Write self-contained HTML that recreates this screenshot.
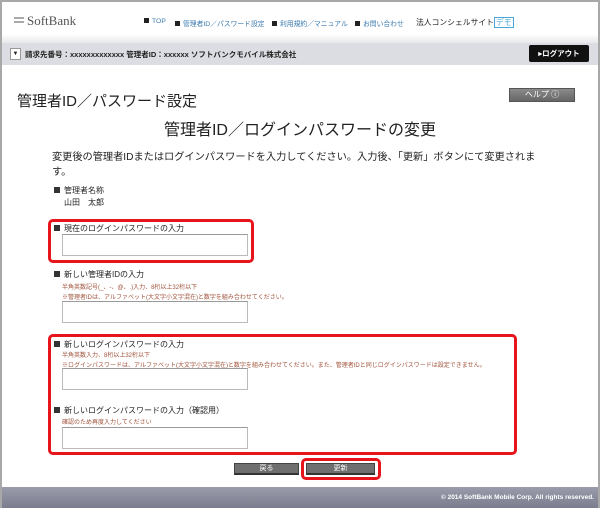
<!DOCTYPE html>
<html><head><meta charset="utf-8"><style>
*{margin:0;padding:0;box-sizing:border-box}
body{width:600px;height:508px;overflow:hidden;background:#fff;font-family:"Liberation Sans","Noto Sans CJK JP",sans-serif;color:#222;position:relative}
.a{position:absolute;white-space:nowrap}
.frame{position:absolute;left:0;top:0;width:600px;height:508px;border:2px solid #a8a8a8;border-bottom:none;pointer-events:none}
.nav{font-size:6.8px;color:#3a7ab0}
.nav i{display:inline-block;width:5px;height:5px;background:#222;margin-right:3px;vertical-align:0}
.lbl{font-size:8px;color:#222}
.lbl:before{content:"";display:inline-block;width:6px;height:6px;background:#333;margin-right:4px}
.note{font-size:6px;color:#a0523a}
.inp{position:absolute;border:1px solid #bbb;border-top-color:#999;background:#fff;width:186px;height:22px}
.red{position:absolute;border:3px solid #e8141c;border-radius:5px}
.btn{position:absolute;background:#6f6f6f;border:1px solid #444;border-bottom:2px solid #333;color:#fff;font-size:7px;text-align:center;line-height:9px;height:12px}
</style></head><body>
<div class="a" style="left:14px;top:13px;font-family:'Liberation Serif',serif;font-size:13px;color:#555"><span style="display:inline-block;width:10px;height:6px;border-top:2px solid #aaa;border-bottom:2px solid #aaa;vertical-align:2px;margin-right:3px"></span>SoftBank</div>
<div class="a nav" style="left:144px;top:18px"><i></i>TOP</div>
<div class="a nav" style="left:175px;top:18px"><i></i>管理者ID／パスワード設定</div>
<div class="a nav" style="left:272px;top:18px"><i></i>利用規約／マニュアル</div>
<div class="a nav" style="left:355px;top:18px"><i></i>お問い合わせ</div>
<div class="a" style="left:416px;top:17px;font-size:7.8px;color:#222">法人コンシェルサイト<span style="border:1px solid #4aa8d8;color:#4aa8d8;padding:0 1px">デモ</span></div>
<div class="a" style="left:0;top:34px;width:600px;height:9px;background:linear-gradient(#fff,#e8e8ec)"></div>
<div class="a" style="left:0;top:43px;width:600px;height:22px;background:#dcdde2"></div>
<div class="a" style="left:10px;top:48px;width:11px;height:12px;background:#fff;border:1px solid #999;font-size:6px;text-align:center;line-height:10px">▼</div>
<div class="a" style="left:25px;top:49px;font-size:7.5px;font-weight:bold">請求先番号：xxxxxxxxxxxxx 管理者ID：xxxxxx ソフトバンクモバイル株式会社</div>
<div class="a" style="left:529px;top:45px;width:60px;height:17px;background:#111;border-radius:2px;color:#fff;font-size:7.5px;font-weight:bold;text-align:center;line-height:17px">▸ログアウト</div>
<div class="a" style="left:17px;top:90px;font-size:15px;color:#222">管理者ID／パスワード設定</div>
<div class="a" style="left:509px;top:88px;width:66px;height:14px;background:linear-gradient(#8a8a8a,#666);border:1px solid #555;color:#fff;font-size:8px;text-align:center;line-height:12px">ヘルプ ⓘ</div>
<div class="a" style="left:0;top:116px;width:600px;text-align:center;font-size:16px;color:#222">管理者ID／ログインパスワードの変更</div>
<div class="a" style="left:52px;top:150px;font-size:10.2px;line-height:15px;color:#222;white-space:normal;width:500px">変更後の管理者IDまたはログインパスワードを入力してください。入力後、「更新」ボタンにて変更されます。</div>
<div class="a lbl" style="left:54px;top:185px">管理者名称</div>
<div class="a" style="left:64px;top:197px;font-size:8px">山田　太郎</div>
<div class="red" style="left:48px;top:219px;width:206px;height:44px"></div>
<div class="a lbl" style="left:54px;top:223px">現在のログインパスワードの入力</div>
<div class="inp" style="left:62px;top:234px;height:22px"></div>
<div class="a lbl" style="left:54px;top:269px">新しい管理者IDの入力</div>
<div class="a note" style="left:62px;top:282px">半角英数記号(_、-、@、.)入力、8桁以上32桁以下</div>
<div class="a note" style="left:62px;top:292px">※管理者IDは、アルファベット(大文字小文字混在)と数字を組み合わせてください。</div>
<div class="inp" style="left:62px;top:301px"></div>
<div class="red" style="left:48px;top:334px;width:469px;height:121px"></div>
<div class="a lbl" style="left:54px;top:339px">新しいログインパスワードの入力</div>
<div class="a note" style="left:62px;top:350px">半角英数入力、8桁以上32桁以下</div>
<div class="a note" style="left:62px;top:360px">※ログインパスワードは、アルファベット(大文字小文字混在)と数字を組み合わせてください。また、管理者IDと同じログインパスワードは設定できません。</div>
<div class="inp" style="left:62px;top:368px"></div>
<div class="a lbl" style="left:54px;top:405px">新しいログインパスワードの入力（確認用）</div>
<div class="a note" style="left:62px;top:417px">確認のため再度入力してください</div>
<div class="inp" style="left:62px;top:427px"></div>
<div class="btn" style="left:234px;top:463px;width:65px">戻る</div>
<div class="red" style="left:301px;top:458px;width:80px;height:22px"></div>
<div class="btn" style="left:306px;top:463px;width:69px">更新</div>
<div class="a" style="left:0;top:487px;width:600px;height:21px;background:linear-gradient(#9a9cab,#7b7d8e)"></div>
<div class="a" style="right:6px;top:494px;font-size:6.5px;color:#fff;font-weight:bold">© 2014 SoftBank Mobile Corp. All rights reserved.</div>
<div class="frame"></div>
</body></html>
